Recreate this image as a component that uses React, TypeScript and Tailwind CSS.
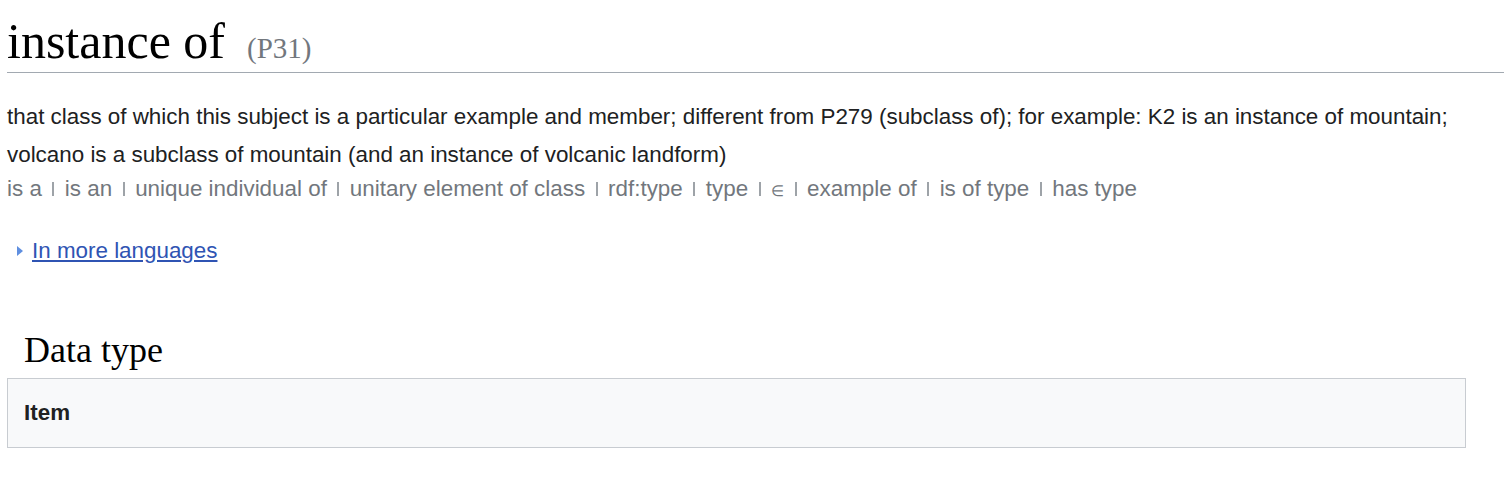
export default function App() {
  const aliases = ["is a", "is an", "unique individual of", "unitary element of class", "rdf:type", "type", "∈", "example of", "is of type", "has type"];
  return (
    <div className="bg-white w-[1504px] h-[486px] overflow-hidden" style={{ fontFamily: '"Liberation Sans", Arial, sans-serif' }}>
      <div className="pl-[7px]">
        <h1 className="flex items-baseline border-b border-[#a2a9b1] pt-[11px] pb-[1px] text-black font-normal" style={{ fontFamily: '"Liberation Serif", "DejaVu Serif", serif' }}>
          <span className="text-[50px] leading-[60px]">instance of</span>
          <span className="text-[29px] leading-none text-[#72777d] ml-[22px]">(P31)</span>
        </h1>
        <div className="mt-[25px] text-[22.4px] leading-[38px] text-[#202122] pr-[40px]">
          that class of which this subject is a particular example and member; different from P279 (subclass of); for example: K2 is an instance of mountain; volcano is a subclass of mountain (and an instance of volcanic landform)
        </div>
        <div className="text-[22.4px] leading-[30px] text-[#72777d]">
          {aliases.map((a, i) => (
            <span key={i}>
              {i > 0 && <span className="inline-block align-baseline w-[2px] h-[14px] bg-[#9ea3a8] mx-[10.5px]" />}
              {a === "∈" ? <span className="text-[15px]">∈</span> : a}
            </span>
          ))}
        </div>
        <div className="mt-[30px] flex items-center gap-[9px] pl-[10px] text-[22.4px] leading-[30px]">
          <svg width="6" height="10" viewBox="0 0 6 10"><path d="M0 0 L6 5 L0 10 Z" fill="#5f8fe0" /></svg>
          <a href="#" className="text-[#2f54b3] underline">In more languages</a>
        </div>
        <div className="mt-[62px] pl-[17px] text-[36px] leading-[44px] text-black" style={{ fontFamily: '"Liberation Serif", "DejaVu Serif", serif' }}>Data type</div>
        <div className="mt-[6px] w-[1459px] h-[70px] bg-[#f8f9fa] border border-[#c8ccd1] flex items-center pl-[16px] text-[22.4px] font-bold text-[#202122]">Item</div>
      </div>
    </div>
  );
}
